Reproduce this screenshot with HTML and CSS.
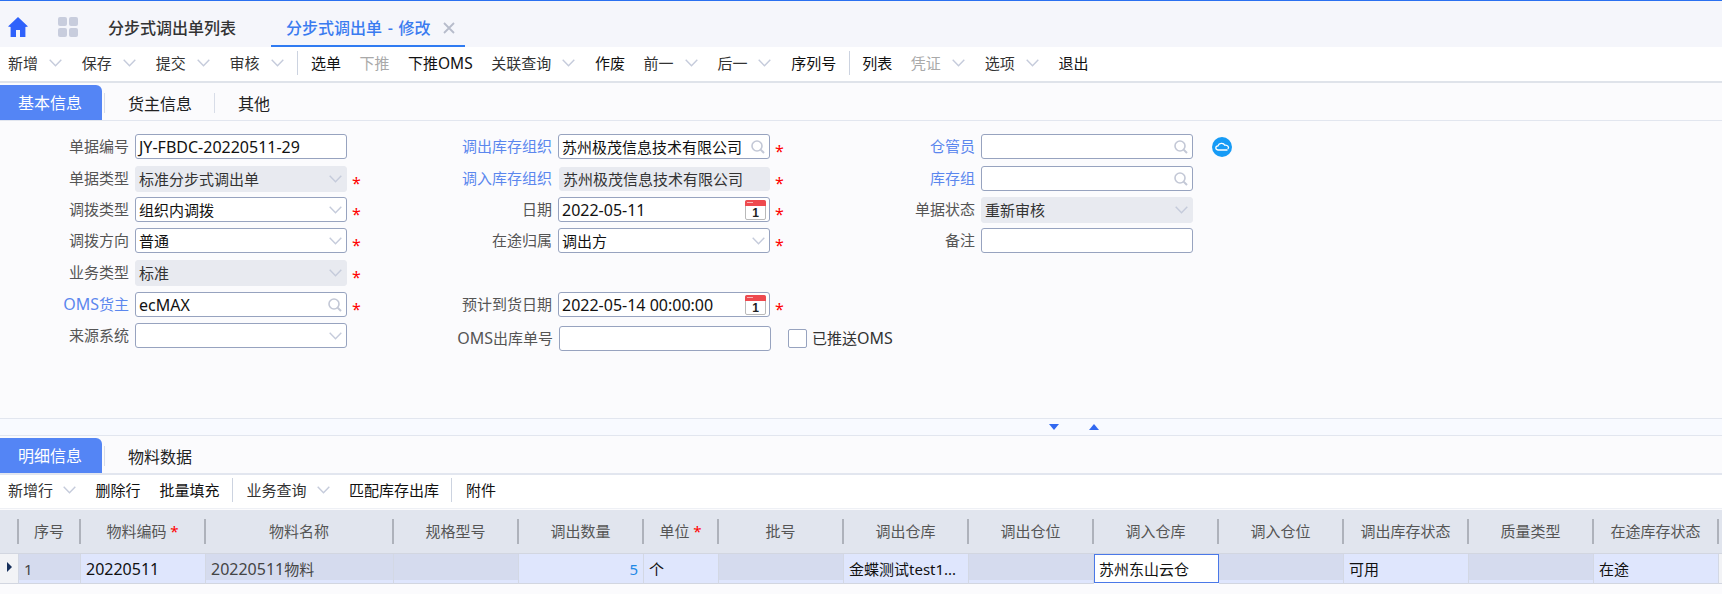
FILE: index.html
```html
<!DOCTYPE html>
<html lang="zh-CN">
<head>
<meta charset="utf-8">
<title>分步式调出单 - 修改</title>
<link rel="stylesheet" href="styles.css">
</head>
<body>
<svg class="defs" width="0" height="0" aria-hidden="true">
  <symbol id="chev" viewBox="0 0 13 8"><polyline points="0.7,0.8 6.5,6.8 12.3,0.8" fill="none" stroke="#c5cbdb" stroke-width="1.4"/></symbol>
  <symbol id="search" viewBox="0 0 14 14"><circle cx="6" cy="6" r="5" fill="none" stroke="#c3c8d6" stroke-width="1.6"/><line x1="9.6" y1="9.6" x2="13" y2="13" stroke="#c3c8d6" stroke-width="2"/></symbol>
</svg>

<header class="titlebar">
  <svg class="home" viewBox="0 0 20 20"><path d="M10 0 20 9.6 17.4 10V20H12V13H8V20H2.600V10L0 9.600Z" fill="#2f62fb"/></svg>
  <span class="apps"><i></i><i></i><i></i><i></i></span>
  <span class="title">分步式调出单列表</span>
  <span class="title active">分步式调出单 - 修改<svg class="close" viewBox="0 0 12 12"><path d="M1 1 11 11M11 1 1 11" stroke="#b7bccb" stroke-width="1.800"/></svg></span>
</header>

<nav class="toolbar main-bar">
  <span class="tool">新增<svg class="chev"><use href="#chev"/></svg></span>
  <span class="tool">保存<svg class="chev"><use href="#chev"/></svg></span>
  <span class="tool">提交<svg class="chev"><use href="#chev"/></svg></span>
  <span class="tool">审核<svg class="chev"><use href="#chev"/></svg></span>
  <span class="sep"></span>
  <span class="tool strong">选单</span>
  <span class="tool off">下推</span>
  <span class="tool strong">下推<span class="oms">OMS</span></span>
  <span class="tool">关联查询<svg class="chev"><use href="#chev"/></svg></span>
  <span class="tool strong">作废</span>
  <span class="tool">前一<svg class="chev"><use href="#chev"/></svg></span>
  <span class="tool">后一<svg class="chev"><use href="#chev"/></svg></span>
  <span class="tool strong">序列号</span>
  <span class="sep"></span>
  <span class="tool strong">列表</span>
  <span class="tool off">凭证<svg class="chev"><use href="#chev"/></svg></span>
  <span class="tool">选项<svg class="chev"><use href="#chev"/></svg></span>
  <span class="tool strong">退出</span>
</nav>

<div class="tabs first-tabs">
  <span class="tab on">基本信息</span>
  <span class="tab">货主信息</span>
  <span class="tab">其他</span>
</div>

<section class="form">
  <div class="field"><label>单据编号</label><div class="input"><span class="lat">JY-FBDC-20220511-29</span></div></div>
  <div class="field"><label class="link">调出库存组织</label><div class="input">苏州极茂信息技术有限公司<svg class="search"><use href="#search"/></svg></div><b class="star">*</b></div>
  <div class="field"><label class="link">仓管员</label><div class="input"><svg class="search"><use href="#search"/></svg></div><svg class="cloud" viewBox="0 0 20 20"><circle cx="10" cy="10" r="10" fill="#169bf6"/><path d="M5.500 13H15.500M6 13C3 12.600 3.200 9 6 8.800 7 5.800 11.500 5.400 12.800 8.200 15.800 7.800 17.600 10.600 15.800 12" fill="none" stroke="#fff" stroke-width="1.300"/></svg></div>

  <div class="field"><label>单据类型</label><div class="input locked">标准分步式调出单<svg class="chev"><use href="#chev"/></svg></div><b class="star">*</b></div>
  <div class="field"><label class="link">调入库存组织</label><div class="input locked plain">苏州极茂信息技术有限公司</div><b class="star">*</b></div>
  <div class="field"><label class="link">库存组</label><div class="input"><svg class="search"><use href="#search"/></svg></div></div>

  <div class="field"><label>调拨类型</label><div class="input">组织内调拨<svg class="chev"><use href="#chev"/></svg></div><b class="star">*</b></div>
  <div class="field"><label>日期</label><div class="input date"><span class="lat">2022-05-11</span><svg class="cal" viewBox="0 0 21 20"><rect x="0.500" y="0.500" width="20" height="19" rx="1.500" fill="#fff" stroke="#b9b9b9"/><path d="M0 2a2 2 0 0 1 2-2h17a2 2 0 0 1 2 2v4H0z" fill="#ee4a4f"/><rect x="2" y="2" width="6" height="1" fill="#f9b4b6"/><text x="10.500" y="17" text-anchor="middle" class="cal-num">1</text></svg></div><b class="star">*</b></div>
  <div class="field"><label>单据状态</label><div class="input locked">重新审核<svg class="chev"><use href="#chev"/></svg></div></div>

  <div class="field"><label>调拨方向</label><div class="input">普通<svg class="chev"><use href="#chev"/></svg></div><b class="star">*</b></div>
  <div class="field"><label>在途归属</label><div class="input">调出方<svg class="chev"><use href="#chev"/></svg></div><b class="star">*</b></div>
  <div class="field"><label>备注</label><div class="input"></div></div>

  <div class="field"><label>业务类型</label><div class="input locked">标准<svg class="chev"><use href="#chev"/></svg></div><b class="star">*</b></div>
  <div class="field"></div>
  <div class="field"></div>

  <div class="field"><label class="link"><span class="lat">OMS</span>货主</label><div class="input"><span class="lat">ecMAX</span><svg class="search"><use href="#search"/></svg></div><b class="star">*</b></div>
  <div class="field"><label>预计到货日期</label><div class="input date"><span class="lat">2022-05-14 00:00:00</span><svg class="cal" viewBox="0 0 21 20"><rect x="0.500" y="0.500" width="20" height="19" rx="1.500" fill="#fff" stroke="#b9b9b9"/><path d="M0 2a2 2 0 0 1 2-2h17a2 2 0 0 1 2 2v4H0z" fill="#ee4a4f"/><rect x="2" y="2" width="6" height="1" fill="#f9b4b6"/><text x="10.500" y="17" text-anchor="middle" class="cal-num">1</text></svg></div><b class="star">*</b></div>
  <div class="field"></div>

  <div class="field"><label>来源系统</label><div class="input"><svg class="chev"><use href="#chev"/></svg></div></div>
  <div class="field low"><label><span class="lat">OMS</span>出库单号</label><div class="input"></div><span class="check"><i class="box"></i><span>已推送<span class="lat">OMS</span></span></span></div>
  <div class="field"></div>
</section>

<div class="splitter">
  <svg class="tri" viewBox="0 0 10 6"><path d="M0 0H10L5 6Z" fill="#3268f0"/></svg>
  <svg class="tri" viewBox="0 0 10 6"><path d="M0 6H10L5 0Z" fill="#3268f0"/></svg>
</div>

<div class="tabs second-tabs">
  <span class="tab on">明细信息</span>
  <span class="tab">物料数据</span>
</div>

<nav class="toolbar sub-bar">
  <span class="tool">新增行<svg class="chev"><use href="#chev"/></svg></span>
  <span class="tool strong">删除行</span>
  <span class="tool strong">批量填充</span>
  <span class="sep"></span>
  <span class="tool">业务查询<svg class="chev"><use href="#chev"/></svg></span>
  <span class="tool strong">匹配库存出库</span>
  <span class="sep"></span>
  <span class="tool strong">附件</span>
</nav>

<section class="grid">
  <div class="gh"><span></span></div>
  <div class="gh"><span>序号</span></div>
  <div class="gh"><span>物料编码 <b class="req">*</b></span></div>
  <div class="gh"><span>物料名称</span></div>
  <div class="gh"><span>规格型号</span></div>
  <div class="gh"><span>调出数量</span></div>
  <div class="gh"><span>单位 <b class="req">*</b></span></div>
  <div class="gh"><span>批号</span></div>
  <div class="gh"><span>调出仓库</span></div>
  <div class="gh"><span>调出仓位</span></div>
  <div class="gh"><span>调入仓库</span></div>
  <div class="gh"><span>调入仓位</span></div>
  <div class="gh"><span>调出库存状态</span></div>
  <div class="gh"><span>质量类型</span></div>
  <div class="gh"><span>在途库存状态</span></div>
  <div class="gh tail"></div>

  <div class="gc marker"><svg class="arrow" viewBox="0 0 5 10"><path d="M0 0 5 5 0 10Z" fill="#17305c"/></svg></div>
  <div class="gc dis seq">1</div>
  <div class="gc"><span class="lat">20220511</span></div>
  <div class="gc dis"><span class="lat">20220511</span>物料</div>
  <div class="gc dis"></div>
  <div class="gc num">5</div>
  <div class="gc">个</div>
  <div class="gc dis"></div>
  <div class="gc ell">金蝶测试test1...</div>
  <div class="gc dis"></div>
  <div class="gc focus">苏州东山云仓</div>
  <div class="gc dis"></div>
  <div class="gc">可用</div>
  <div class="gc dis"></div>
  <div class="gc">在途</div>
  <div class="gc tail"></div>
</section>
</body>
</html>
```

FILE: styles.css
```css
* { box-sizing: border-box; }
html, body { margin: 0; padding: 0; }
body {
  width: 1722px;
  height: 594px;
  overflow: hidden;
  background: #fbfbfd;
  color: #111;
  font: 15px/20px "Noto Sans", "Noto Sans CJK SC", sans-serif;
}
.defs { display: block; height: 0; }
.lat { font-size: 16px; }
.oms { font-size: 15.500px; }

.titlebar {
  height: 47px;
  display: flex;
  align-items: flex-start;
  background: #f5f6fb;
  border-top: 1px solid #2a70f0;
  padding: 16px 0 0 8px;
}
.home { width: 20px; height: 20px; flex: none; }
.apps {
  margin-left: 30px;
  width: 20px;
  height: 20px;
  display: grid;
  grid-template-columns: 9px 9px;
  grid-auto-rows: 9px;
  gap: 2px;
}
.apps i { background: #c8cddd; border-radius: 2px; }
.title {
  margin-left: 30px;
  font-size: 16px;
  font-weight: 500;
  color: #333;
  line-height: 22px;
}
.title.active {
  margin-left: 35px;
  width: 194px;
  height: 30px;
  padding-left: 15px;
  color: #3a7bf0;
  border-bottom: 2px solid #2f7bf2;
  display: flex;
  align-items: flex-start;
  white-space: pre;
  word-spacing: 1.500px;
}
.close { width: 12px; height: 12px; margin: 5px 0 0 13px; flex: none; }

.toolbar {
  display: flex;
  align-items: center;
  background: #fff;
  padding-left: 8px;
}
.main-bar {
  gap: 18.500px;
  height: 36px;
  padding-bottom: 2px;
  border-bottom: 2px solid #dfe3ea;
}
.sub-bar {
  gap: 19px;
  height: 35px;
  padding-bottom: 3px;
  border-top: 1px solid #e2e6ef;
  border-bottom: 1px solid #eef0f5;
  margin-bottom: 1px;
}
.tool {
  display: flex;
  align-items: center;
  white-space: nowrap;
  color: #333;
}
.tool.strong { color: #111; }
.tool.off { color: #a9a9a9; }
.tool .chev { margin-left: 11px; margin-right: 1.350px; }
.sub-bar .tool .chev { margin-left: 10px; margin-right: 0.500px; }
.chev { width: 13px; height: 8px; flex: none; }
.sep {
  width: 1px;
  height: 24px;
  margin: 0 -6px;
  background: #ccd3e0;
}
.sub-bar .sep { margin: 0 -5px 0 -7px; }

.tabs {
  display: flex;
  align-items: center;
  border-bottom: 1px solid #e2e6ef;
}
.first-tabs { height: 36px; margin-top: 2px; }
.second-tabs { height: 36px; margin-top: 2px; }
.tab {
  font-size: 16px;
  height: 20px;
  line-height: 22px;
  padding: 0 22px 0 23px;
  border-right: 1px solid #d8dde8;
  color: #222;
}
.tab:last-child { border-right: 0; }
.tab.on {
  width: 102px;
  height: 35px;
  line-height: 37px;
  margin-right: 2px;
  padding: 0 0 0 18px;
  color: #fff;
  background: #5485f5;
  border: 0;
  border-top-right-radius: 6px;
}
.tab.on + .tab { border-left: 1px solid #d8dde8; }

.form {
  height: 297px;
  padding-top: 13px;
  display: grid;
  grid-template-columns: 423px 423px 1fr;
  grid-template-rows: 32px 31px 31px 32px 32px 31px 26px;
}
.field { display: flex; align-items: flex-start; min-width: 0; }
.field label {
  width: 129px;
  margin-right: 6px;
  text-align: right;
  white-space: nowrap;
  color: #555;
  line-height: 25px;
  flex: none;
}
.field label.link { color: #5b87ee; }
.input {
  width: 212px;
  height: 25px;
  display: flex;
  align-items: center;
  justify-content: space-between;
  padding: 1px 4px 0 3px;
  background: #fff;
  border: 1px solid #97a3bf;
  border-radius: 3px;
  white-space: nowrap;
  color: #111;
  flex: none;
  line-height: 21px;
}
.input .chev, .input .search { margin-left: auto; margin-top: -1px; }
.search { width: 14px; height: 14px; flex: none; }
.input.locked {
  border-color: #e8eaf0;
  background: #e8eaf0;
  height: 26px;
  color: #333;
}
.input.plain { width: 211px; height: 24px; margin: 1px 0 0 1px; }
.input.date { padding-right: 3px; padding-left: 3px; }
.cal { width: 21px; height: 20px; margin-left: auto; margin-top: -1px; flex: none; }
.cal-num { font: 700 12px "Liberation Sans", sans-serif; fill: #222; }
.star {
  margin-left: 5px;
  font-weight: 400;
  color: #f00;
  font-size: 16px;
  line-height: 20px;
  padding-top: 7px;
}
.field.low { padding-top: 3px; }
.field.low label { width: 130px; }
.check {
  margin-left: 17px;
  padding-top: 2px;
  display: flex;
  align-items: center;
  gap: 5px;
  color: #333;
  white-space: nowrap;
}
.box {
  width: 19px;
  height: 19px;
  display: block;
  background: #fff;
  border: 1px solid #97a3bf;
  border-radius: 2px;
}
.cloud { width: 20px; height: 20px; margin: 3px 0 0 19px; flex: none; }

.splitter {
  height: 18px;
  background: #f8faff;
  border-top: 1px solid #e2e6ef;
  border-bottom: 1px solid #e2e6ef;
  display: flex;
  align-items: center;
  padding-left: 1049px;
  gap: 30px;
}
.tri { width: 10px; height: 6px; flex: none; }

.grid {
  display: grid;
  grid-template-columns: 19px 62px 125px 188px 125px 125px 75px repeat(8, 125px) 3px;
  grid-template-rows: 44px 30px;
}
.gh {
  background: #e1e5ee;
  display: flex;
  align-items: center;
  border-bottom: 1px solid #d2d6e0;
  color: #555;
}
.gh span {
  flex: 1;
  height: 25px;
  line-height: 25px;
  text-align: center;
  border-right: 2px solid #aeb2bb;
  white-space: nowrap;
}
.req { color: #f00; font-weight: 400; }
.gc {
  height: 30px;
  padding: 0 5px;
  background: #dfe6fd;
  border-right: 1px solid #d3d8e4;
  border-bottom: 1px solid #d2d6e0;
  line-height: 31px;
  white-space: nowrap;
  overflow: hidden;
  color: #111;
}
.gc.dis {
  color: #444;
  background: linear-gradient(#d5dbee 0 26px, #dfe6fd 26px);
}
.gc.marker {
  background: #f2f3f6;
  padding: 0 0 0 7px;
  display: flex;
  align-items: center;
}
.arrow { width: 5px; height: 10px; margin-bottom: 3px; }
.gc.num { text-align: right; color: #1e88e5; }
.gc.focus {
  background: #fff;
  border: 1px solid #4a78e8;
  padding: 0 4px;
  margin-bottom: 1px;
  height: 29px;
  line-height: 29px;
}
.gc.tail { padding: 0; border-right: 0; background: #f2f3f6; }
```
